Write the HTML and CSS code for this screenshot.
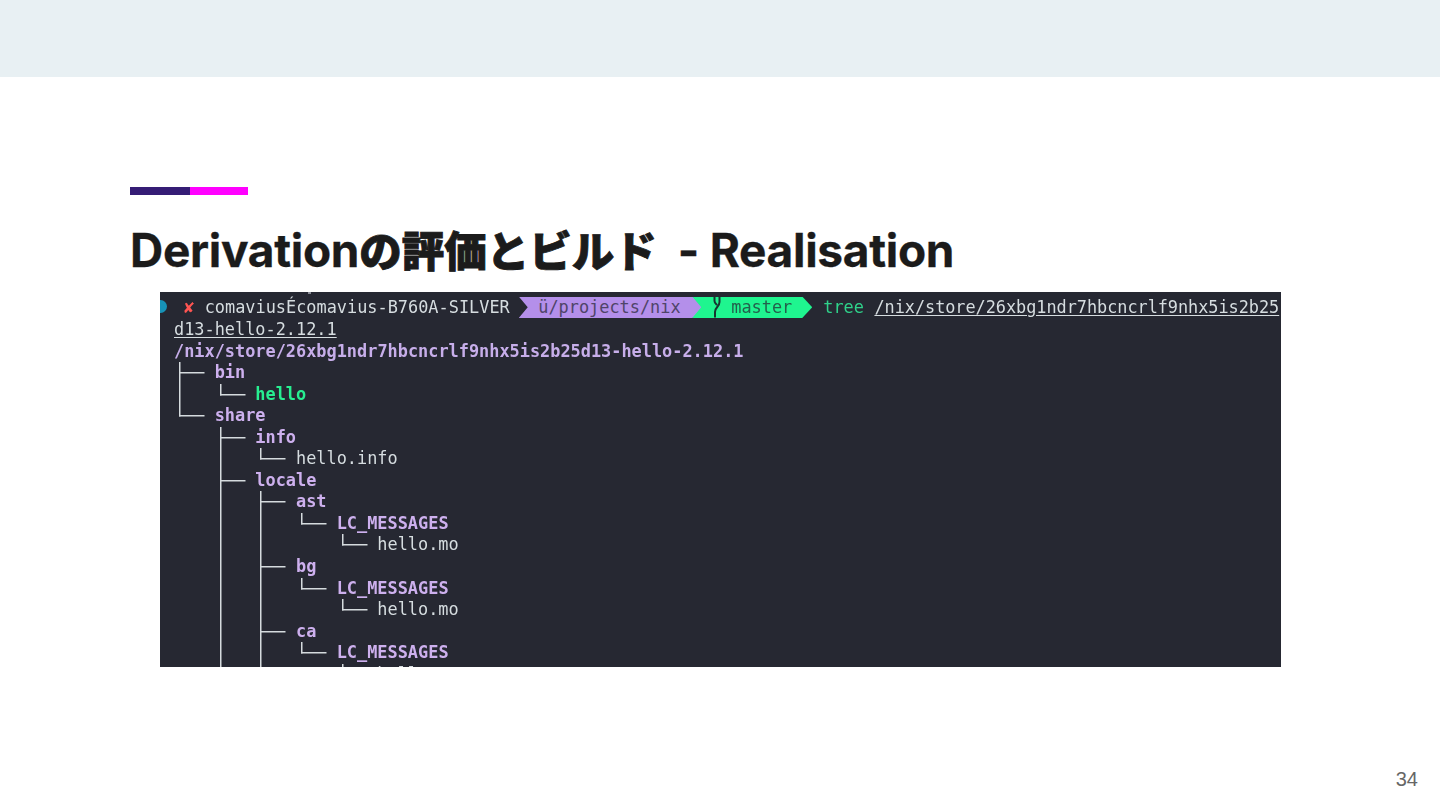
FILE: index.html
```html
<!DOCTYPE html>
<html lang="ja">
<head>
<meta charset="utf-8">
<title>Derivationの評価とビルド - Realisation</title>
<link rel="stylesheet" href="styles.css">
</head>
<body>
<div class="slide">
  <div class="band"></div>
  <main class="content">
    <div class="accent"><span class="accent-a"></span><span class="accent-b"></span></div>
    <h1 class="title"><span class="latin">Derivation</span><span class="cjk">の評価とビルド</span><span class="latin">&nbsp; - Realisation</span></h1>
    <section class="term">
      <div class="clip"><span class="tick"></span></div>
      <div class="row prompt">
        <span class="dot"></span>
        <span class="cross">✘</span>
        <span class="host">comaviusÉcomavius-B760A-SILVER</span>
        <span class="seg seg-dir">ü/projects/nix</span>
        <span class="seg seg-git">
          <svg class="branch" viewBox="0 0 12 22" width="12" height="22"><path d="M9.5 0.5V6C9.5 11 5 11 5 16V21.5M4.5 1V5C4.5 7 6 8 7 9" fill="none" stroke="#17352f" stroke-width="2"/></svg>
          <span>master</span>
        </span>
        <span class="cmd">tree</span>
        <span class="path path-cmd">/nix/store/26xbg1ndr7hbcncrlf9nhx5is2b25</span>
      </div>
      <div class="row text"><span class="path">d13-hello-2.12.1</span></div>
      <div class="row dir">/nix/store/26xbg1ndr7hbcncrlf9nhx5is2b25d13-hello-2.12.1</div>
      <div class="row"><i class="c t"></i><b class="dir">bin</b></div>
      <div class="row"><i class="c v"></i><i class="c l"></i><b class="exe">hello</b></div>
      <div class="row"><i class="c l"></i><b class="dir">share</b></div>
      <div class="row"><i class="c"></i><i class="c t"></i><b class="dir">info</b></div>
      <div class="row"><i class="c"></i><i class="c v"></i><i class="c l"></i><span class="text">hello.info</span></div>
      <div class="row"><i class="c"></i><i class="c t"></i><b class="dir">locale</b></div>
      <div class="row"><i class="c"></i><i class="c v"></i><i class="c t"></i><b class="dir">ast</b></div>
      <div class="row"><i class="c"></i><i class="c v"></i><i class="c v"></i><i class="c l"></i><b class="dir">LC_MESSAGES</b></div>
      <div class="row"><i class="c"></i><i class="c v"></i><i class="c v"></i><i class="c"></i><i class="c l"></i><span class="text">hello.mo</span></div>
      <div class="row"><i class="c"></i><i class="c v"></i><i class="c t"></i><b class="dir">bg</b></div>
      <div class="row"><i class="c"></i><i class="c v"></i><i class="c v"></i><i class="c l"></i><b class="dir">LC_MESSAGES</b></div>
      <div class="row"><i class="c"></i><i class="c v"></i><i class="c v"></i><i class="c"></i><i class="c l"></i><span class="text">hello.mo</span></div>
      <div class="row"><i class="c"></i><i class="c v"></i><i class="c t"></i><b class="dir">ca</b></div>
      <div class="row"><i class="c"></i><i class="c v"></i><i class="c v"></i><i class="c l"></i><b class="dir">LC_MESSAGES</b></div>
      <div class="row"><i class="c"></i><i class="c v"></i><i class="c v"></i><i class="c"></i><i class="c l"></i><span class="text">hello.mo</span></div>
    </section>
  </main>
  <footer class="foot">34</footer>
</div>
</body>
</html>
```
FILE: styles.css
```css
* { box-sizing: border-box; }
html, body { margin: 0; padding: 0; background: #fff; }
.slide { width: 1440px; height: 810px; overflow: hidden; display: flex; flex-direction: column; background: #fff; }
.band { height: 77px; flex: none; background: #e8f0f3; }
.content { flex: 1; padding: 110px 159px 0 130px; display: flex; flex-direction: column; }
.accent { display: flex; height: 8px; width: 118px; }
.accent-a { width: 60px; background: #351c75; }
.accent-b { width: 58px; background: #ff00ff; }
.title {
  margin: 27px 0 0;
  height: 70px;
  line-height: 54px;
  font-weight: 700;
  color: #1b1b1b;
  white-space: nowrap;
  font-family: Inter, "Noto Sans CJK JP", sans-serif;
}
.latin { font-size: 46px; letter-spacing: -0.3px; -webkit-text-stroke: 0.3px #1b1b1b; }
.cjk { font-size: 42.5px; font-weight: 900; font-family: "Noto Sans CJK JP", sans-serif; -webkit-text-stroke: 0.9px #1b1b1b; }
.term {
  margin-left: 30px;
  width: 1121px;
  height: 375px;
  flex: none;
  overflow: hidden;
  background: #262832;
  font: 400 16.9px/21.55px "DejaVu Sans Mono", monospace;
  color: #d6dde0;
}
.clip { height: 4.5px; padding-left: 148px; }
.tick { display: block; width: 3px; height: 2px; background: #8a8d96; }
.row { display: flex; height: 21.55px; padding-left: 14px; white-space: pre; filter: blur(0.6px); }
.prompt { padding-left: 0; align-items: flex-start; height: 22.5px; }
.dot { width: 7px; height: 13px; margin-top: 3px; background: #1793b8; border-radius: 0 7px 7px 0; }
.cross { width: 10.17px; margin-left: 17px; color: #ff5552; font-weight: 700; }
.host { margin-left: 10.5px; color: #d6dde0; }
.seg { display: flex; align-items: center; height: 21.55px; }
.seg-dir {
  position: relative;
  z-index: 1;
  margin-left: 9px;
  width: 182.5px;
  padding-left: 19.5px;
  background: #b48fea;
  color: #4f4469;
  clip-path: polygon(0 0, calc(100% - 9px) 0, 100% 50%, calc(100% - 9px) 100%, 0 100%, 9px 50%);
}
.seg-git {
  margin-left: -9px;
  width: 120px;
  padding-left: 18px;
  background: #1ff58f;
  color: #23604c;
  clip-path: polygon(0 0, calc(100% - 10px) 0, 100% 50%, calc(100% - 10px) 100%, 0 100%);
}
.branch { margin-right: 9px; }
.cmd { margin-left: 11px; color: #2fd18a; }
.path { color: #d6dde0; text-decoration: underline; text-underline-offset: 2px; }
.path-cmd { margin-left: 10.5px; letter-spacing: -0.05px; }
.row.text, .text { color: #d6dde0; }
.dir { color: #cdb0ee; font-weight: 700; }
.row.dir { color: #c7aeea; }
.exe { color: #27ef91; font-weight: 700; }
.c { flex: none; width: 40.68px; height: 21.55px; background-repeat: no-repeat; }
.v { background-image: linear-gradient(#d5dbde, #d5dbde); background-size: 1.5px 100%; background-position: 5px 0; }
.t {
  background-image: linear-gradient(#d5dbde, #d5dbde), linear-gradient(#d5dbde, #d5dbde);
  background-size: 1.5px 100%, 25.5px 1.5px;
  background-position: 5px 0, 5px 10px;
}
.l {
  background-image: linear-gradient(#d5dbde, #d5dbde), linear-gradient(#d5dbde, #d5dbde);
  background-size: 1.5px 11.5px, 25.5px 1.5px;
  background-position: 5px 0, 5px 10px;
}
.foot {
  height: 42px;
  flex: none;
  padding-right: 22px;
  text-align: right;
  font: 400 20px/22px "Liberation Sans", Arial, sans-serif;
  color: #666;
}
```
